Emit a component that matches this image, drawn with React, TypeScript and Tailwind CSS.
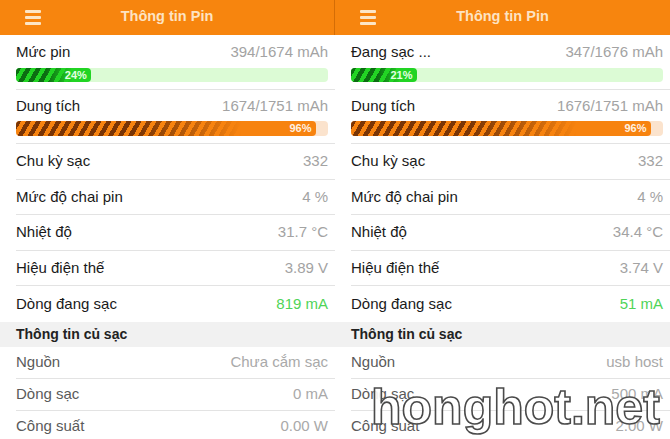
import React from "react";

type Row = { label: string; value: string; green?: boolean };

type PanelData = {
  level: { label: string; value: string; pct: number };
  capacity: { value: string; pct: number };
  rows: Row[];
  charger: Row[];
};

const PANELS: PanelData[] = [
  {
    level: { label: "Mức pin", value: "394/1674 mAh", pct: 24 },
    capacity: { value: "1674/1751 mAh", pct: 96 },
    rows: [
      { label: "Chu kỳ sạc", value: "332" },
      { label: "Mức độ chai pin", value: "4 %" },
      { label: "Nhiệt độ", value: "31.7 °C" },
      { label: "Hiệu điện thế", value: "3.89 V" },
      { label: "Dòng đang sạc", value: "819 mA", green: true },
    ],
    charger: [
      { label: "Nguồn", value: "Chưa cắm sạc" },
      { label: "Dòng sạc", value: "0 mA" },
      { label: "Công suất", value: "0.00 W" },
    ],
  },
  {
    level: { label: "Đang sạc ...", value: "347/1676 mAh", pct: 21 },
    capacity: { value: "1676/1751 mAh", pct: 96 },
    rows: [
      { label: "Chu kỳ sạc", value: "332" },
      { label: "Mức độ chai pin", value: "4 %" },
      { label: "Nhiệt độ", value: "34.4 °C" },
      { label: "Hiệu điện thế", value: "3.74 V" },
      { label: "Dòng đang sạc", value: "51 mA", green: true },
    ],
    charger: [
      { label: "Nguồn", value: "usb host" },
      { label: "Dòng sạc", value: "500 mA" },
      { label: "Công suất", value: "2.00 W" },
    ],
  },
];

function Bar({ pct, kind, h }: { pct: number; kind: "green" | "orange"; h: string }) {
  const green = kind === "green";
  return (
    <div className={`${h} w-full rounded-[4px] ${green ? "bg-[#dcfbd5]" : "bg-[#fbe3cd]"}`}>
      <div
        className={`relative h-full rounded-[4px] overflow-hidden ${green ? "bg-[#22d424]" : "bg-[#f7830f]"}`}
        style={{ width: `${pct}%` }}
      >
        <div
          className={`absolute inset-0 [mask-image:linear-gradient(to_right,#000_40%,transparent_75%)] [-webkit-mask-image:linear-gradient(to_right,#000_40%,transparent_75%)] ${
            green
              ? "bg-[repeating-linear-gradient(120deg,#0c6d12_0px,#0c6d12_4.5px,transparent_4.5px,transparent_8.7px)]"
              : "bg-[repeating-linear-gradient(120deg,#7a3505_0px,#7a3505_4.5px,transparent_4.5px,transparent_8.7px)]"
          }`}
        />
        <span
          className={`absolute right-[4px] top-0 h-full flex items-center text-[11px] font-bold leading-none ${
            green ? "text-[#e4ffe2]" : "text-[#fff1e2]"
          }`}
        >
          {pct}%
        </span>
      </div>
    </div>
  );
}

function Panel({ d, first }: { d: PanelData; first?: boolean }) {
  return (
    <div className="w-[335px] shrink-0 flex flex-col">
      {/* header */}
      <div
        className={`h-[35px] shrink-0 bg-[#f7850e] grid grid-cols-[1fr_auto_1fr] items-center pb-[3px] ${
          first ? "border-r border-[#d46d06]" : ""
        }`}
      >
        <div className="pl-[25px] flex flex-col gap-[3px] pt-[3px]">
          <span className="block w-[16px] h-[3.3px] rounded-[1px] bg-[#fde6c6]" />
          <span className="block w-[16px] h-[3.3px] rounded-[1px] bg-[#fde6c6]" />
          <span className="block w-[16px] h-[3.3px] rounded-[1px] bg-[#fde6c6]" />
        </div>
        <div className="text-[14.5px] font-bold text-[#fde3c3] leading-none">Thông tin Pin</div>
        <div />
      </div>

      {/* battery level */}
      <div className="ml-4 shrink-0 pr-[7px] pt-[8px] pb-[7px] border-b border-[#e3e3e3]">
        <div className="flex justify-between text-[15px] leading-[18px]">
          <span className="text-[#1a1a1a]">{d.level.label}</span>
          <span className="text-[#a3a3a3]">{d.level.value}</span>
        </div>
        <div className="mt-[7px]">
          <Bar pct={d.level.pct} kind="green" h="h-[14px]" />
        </div>
      </div>

      {/* capacity */}
      <div className="ml-4 shrink-0 pr-[7px] pt-[7px] pb-[7px] border-b border-[#e3e3e3]">
        <div className="flex justify-between text-[15px] leading-[18px]">
          <span className="text-[#1a1a1a]">Dung tích</span>
          <span className="text-[#a3a3a3]">{d.capacity.value}</span>
        </div>
        <div className="mt-[6px]">
          <Bar pct={d.capacity.pct} kind="orange" h="h-[15px]" />
        </div>
      </div>

      {d.rows.map((r, i) => (
        <div
          key={r.label}
          className={`ml-4 shrink-0 pr-[7px] h-[35.5px] flex items-center justify-between text-[15px] ${
            i < d.rows.length - 1 ? "border-b border-[#e3e3e3]" : ""
          }`}
        >
          <span className="text-[#1a1a1a]">{r.label}</span>
          <span className={r.green ? "text-[#4fd458]" : "text-[#a3a3a3]"}>{r.value}</span>
        </div>
      ))}

      {/* charger section */}
      <div className="h-[25px] shrink-0 bg-[#f1f1f1] pl-4 flex items-center text-[14px] font-bold text-[#222]">
        Thông tin củ sạc
      </div>
      {d.charger.map((r, i) => (
        <div
          key={r.label}
          className={`ml-4 pr-[7px] h-[32px] shrink-0 flex items-center justify-between text-[15px] ${
            i < d.charger.length - 1 ? "border-b border-[#e3e3e3]" : ""
          }`}
        >
          <span className="text-[#5a5a5a]">{r.label}</span>
          <span className="text-[#a9a9a9]">{r.value}</span>
        </div>
      ))}
    </div>
  );
}

export default function App() {
  return (
    <div className="relative flex w-[670px] h-[439px] overflow-hidden bg-white font-['Liberation_Sans',Arial,sans-serif]">
      <Panel d={PANELS[0]} first />
      <Panel d={PANELS[1]} />
      {/* watermark */}
      <div className="absolute left-[371px] top-[382px] text-[50px] leading-none font-bold text-white/90 [-webkit-text-stroke:1.6px_#4a4a4a] select-none">
        honghot.net
      </div>
    </div>
  );
}
